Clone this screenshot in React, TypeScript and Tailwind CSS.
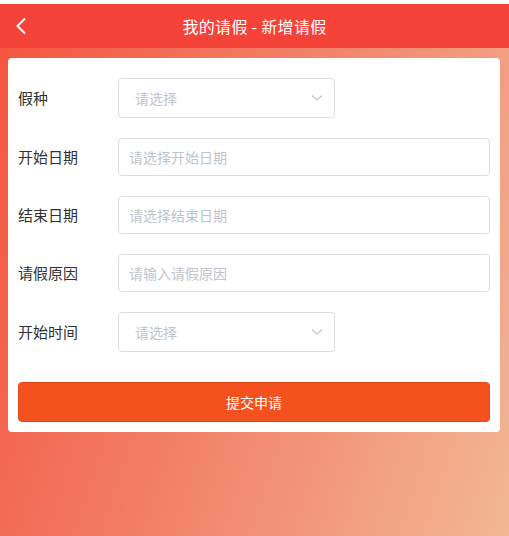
import React from "react";

const font = { fontFamily: '"Noto Sans CJK SC", "Noto Sans", sans-serif' };

function SelectBox() {
  return (
    <div className="w-[217px] h-[40px] border border-[#dcdfe6] rounded-[4px] flex items-center justify-between pl-[16px] pr-[11px] bg-white">
      <span className="text-[14px] text-[#c0c4cc]">请选择</span>
      <svg width="12" height="8" viewBox="0 0 12 8" fill="none">
        <polyline points="1,1.5 6,6 11,1.5" stroke="#c0c4cc" strokeWidth="1.2" fill="none" />
      </svg>
    </div>
  );
}

function InputBox({ placeholder }: { placeholder: string }) {
  return (
    <div className="flex-1 h-[38px] border border-[#dcdfe6] rounded-[4px] flex items-center pl-[10px] bg-white">
      <span className="text-[14px] text-[#c0c4cc]">{placeholder}</span>
    </div>
  );
}

function Row({ label, children }: { label: string; children: React.ReactNode }) {
  return (
    <div className="flex items-center">
      <div className="w-[100px] text-[15px] text-[#303133] shrink-0">{label}</div>
      {children}
    </div>
  );
}

export default function App() {
  return (
    <div className="w-[509px] h-[536px] bg-white pt-[4px] flex flex-col overflow-hidden" style={font}>
      <div className="h-[44px] bg-[#f5433a] relative flex items-center justify-center text-white text-[16px] shrink-0">
        <svg className="absolute left-[15px] top-[13px]" width="12" height="18" viewBox="0 0 12 18" fill="none">
          <polyline points="10,1.5 2.5,9 10,16.5" stroke="white" strokeWidth="2" fill="none" />
        </svg>
        <span className="tracking-[0.3px]">我的请假 - 新增请假</span>
      </div>
      <div className="flex-1 bg-[linear-gradient(108deg,#f5553f_0%,#f27a63_40%,#f2b794_100%)] pl-[8px] pr-[9px] pt-[10px]">
        <div className="bg-white rounded-[4px] px-[10px] pt-[20px] pb-[10px]">
          <div className="flex flex-col gap-[20px]">
            <Row label="假种">
              <SelectBox />
            </Row>
            <Row label="开始日期">
              <InputBox placeholder="请选择开始日期" />
            </Row>
            <Row label="结束日期">
              <InputBox placeholder="请选择结束日期" />
            </Row>
            <Row label="请假原因">
              <InputBox placeholder="请输入请假原因" />
            </Row>
            <Row label="开始时间">
              <SelectBox />
            </Row>
          </div>
          <button className="mt-[30px] w-full h-[40px] rounded-[4px] bg-[#f5511e] border border-[#e2481a] text-white text-[14px] flex items-center justify-center">
            提交申请
          </button>
        </div>
      </div>
    </div>
  );
}
